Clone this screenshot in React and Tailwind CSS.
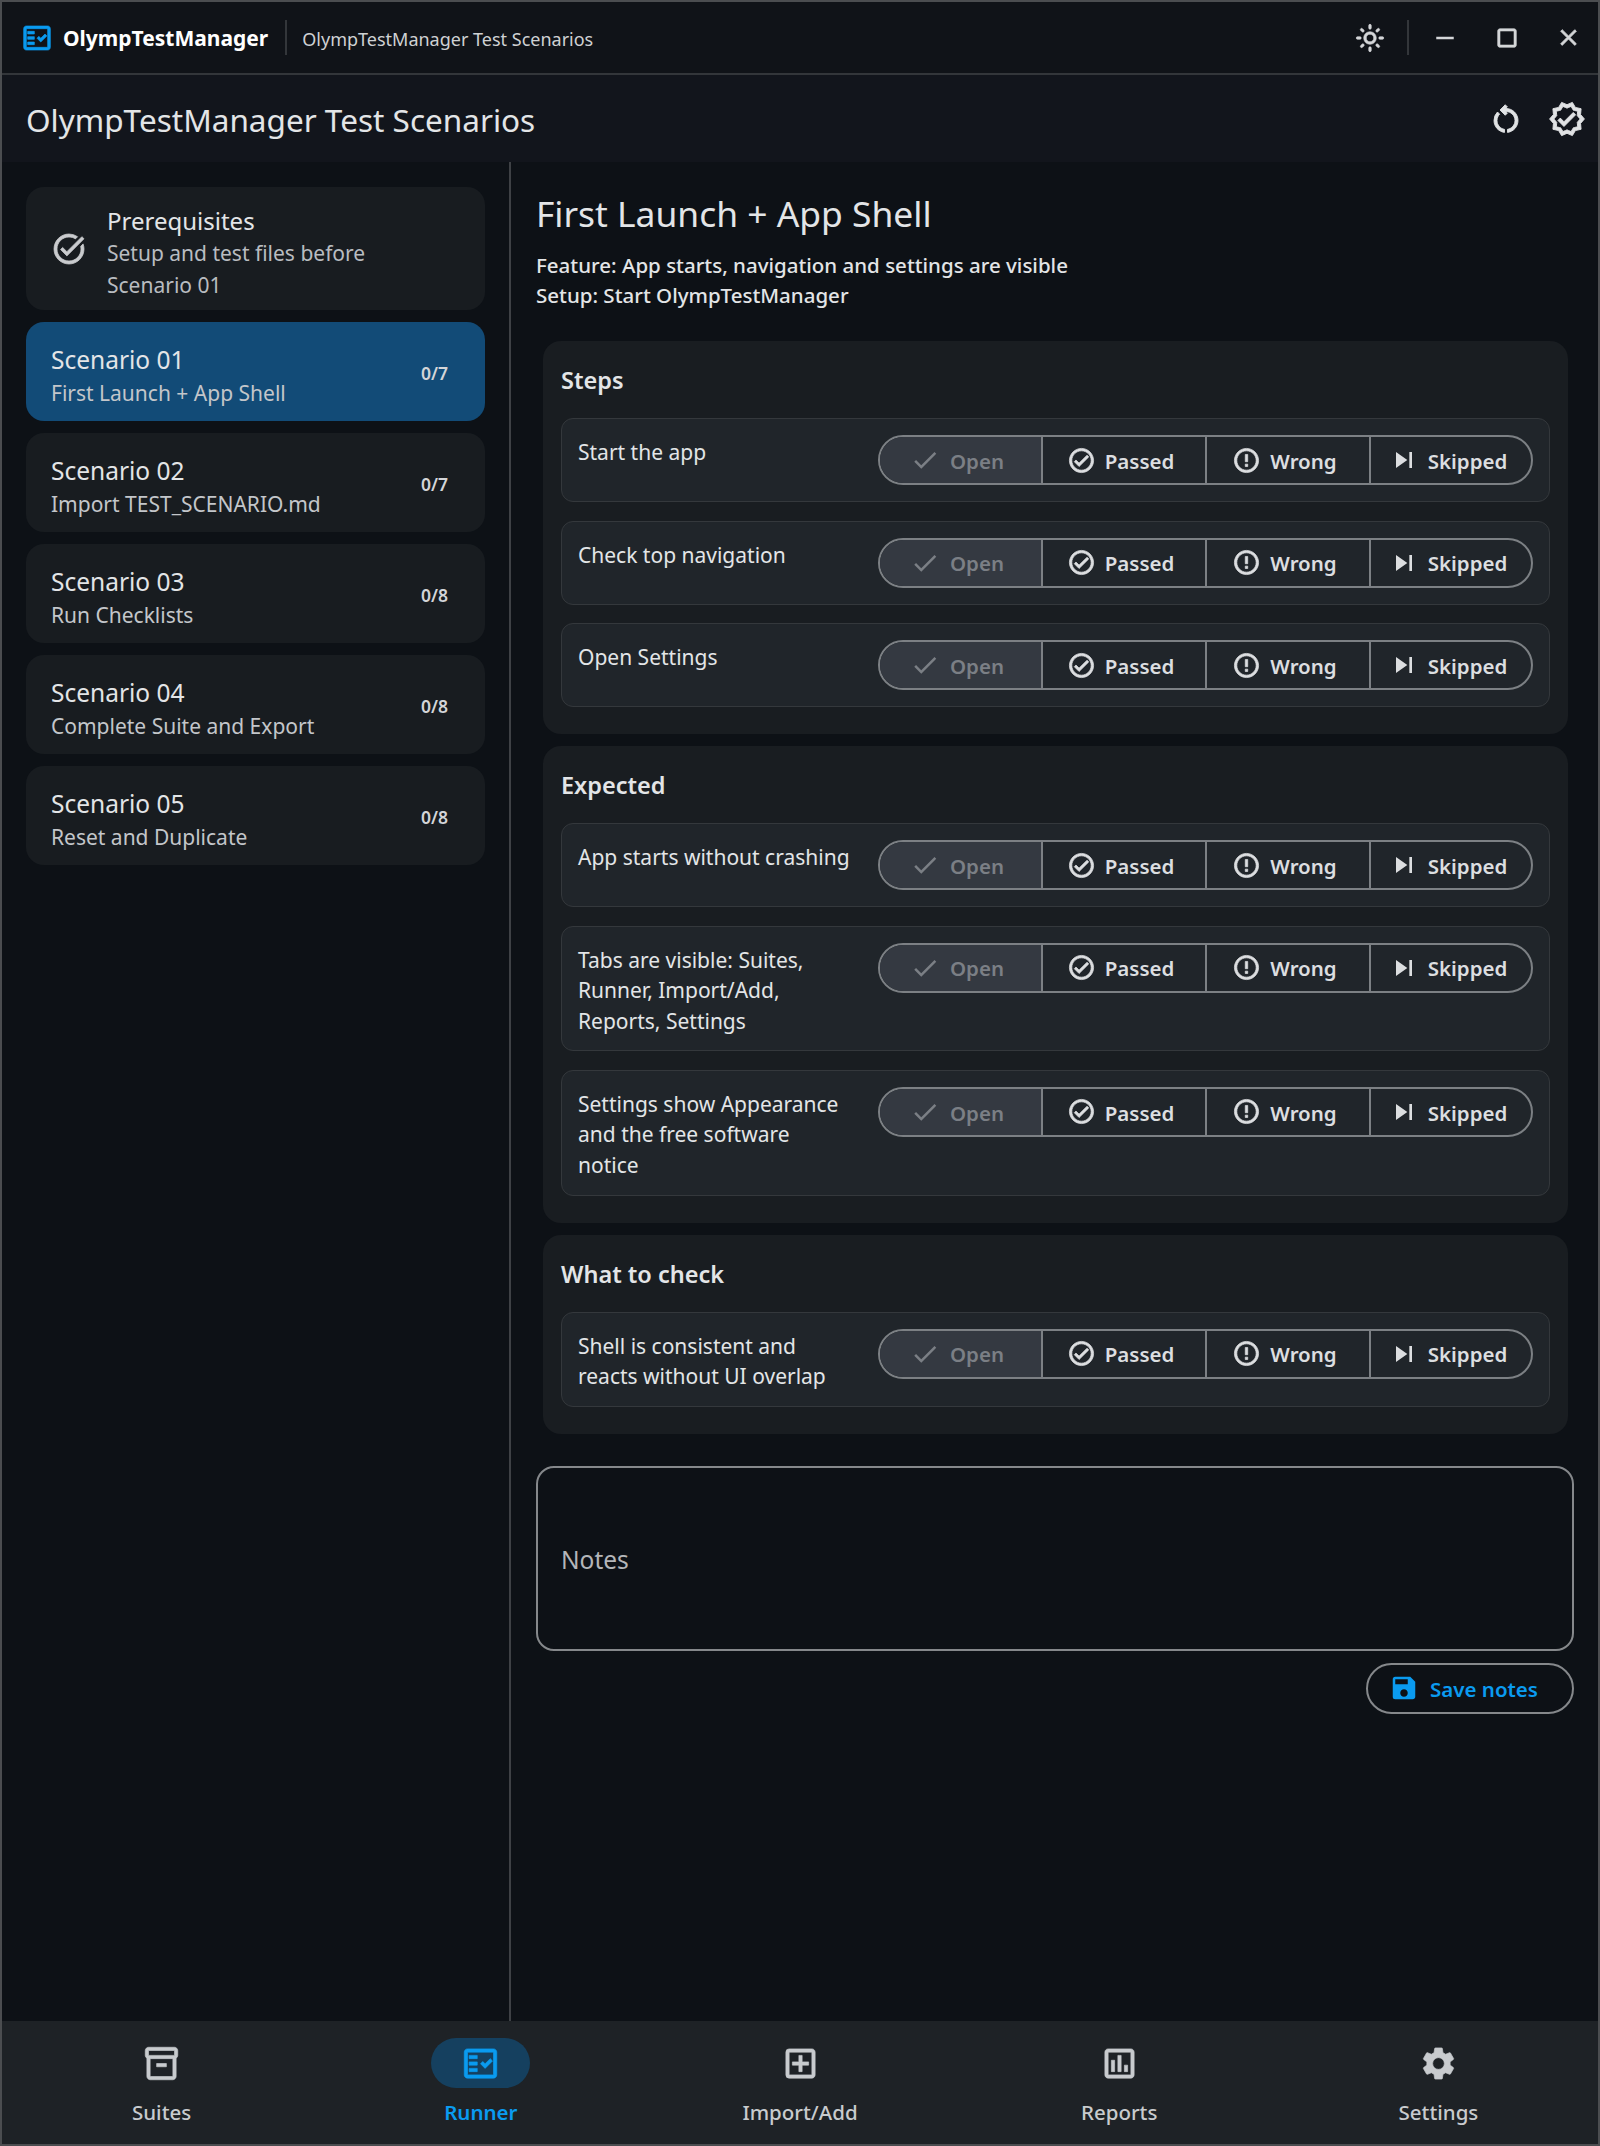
import {
  MdCheck,
  MdClose,
  MdCropSquare,
  MdErrorOutline,
  MdOutlineAddBox,
  MdOutlineAssessment,
  MdOutlineCheckCircle,
  MdOutlineFactCheck,
  MdOutlineInventory2,
  MdOutlineLightMode,
  MdOutlineRestartAlt,
  MdOutlineTaskAlt,
  MdOutlineVerified,
  MdRemove,
  MdSave,
  MdSettings,
  MdSkipNext,
} from "react-icons/md";

const scenarios = [
  { title: "Scenario 01", sub: "First Launch + App Shell", count: "0/7", active: true },
  { title: "Scenario 02", sub: "Import TEST_SCENARIO.md", count: "0/7" },
  { title: "Scenario 03", sub: "Run Checklists", count: "0/8" },
  { title: "Scenario 04", sub: "Complete Suite and Export", count: "0/8" },
  { title: "Scenario 05", sub: "Reset and Duplicate", count: "0/8" },
];

const sections = [
  {
    title: "Steps",
    rows: [["Start the app"], ["Check top navigation"], ["Open Settings"]],
  },
  {
    title: "Expected",
    rows: [
      ["App starts without crashing"],
      ["Tabs are visible: Suites,", "Runner, Import/Add,", "Reports, Settings"],
      ["Settings show Appearance", "and the free software", "notice"],
    ],
  },
  {
    title: "What to check",
    rows: [["Shell is consistent and", "reacts without UI overlap"]],
  },
];

const navItems = [
  { label: "Suites", icon: MdOutlineInventory2 },
  { label: "Runner", icon: MdOutlineFactCheck, active: true },
  { label: "Import/Add", icon: MdOutlineAddBox },
  { label: "Reports", icon: MdOutlineAssessment },
  { label: "Settings", icon: MdSettings },
];

function StatusControl() {
  return (
    <div className="flex h-[50px] w-[655px] shrink-0 overflow-hidden rounded-full border-2 border-[#7c8084] text-[20.5px] font-semibold leading-none text-[#dcdee0]">
      <div className="flex w-[161px] items-center justify-center gap-[10px] bg-[#343941] pr-[7px] text-[#7b7f85]">
        <MdCheck size={30} />
        <span className="pt-[2px]">Open</span>
      </div>
      <div className="flex w-[164px] items-center justify-center gap-[9px] border-l-2 border-[#7c8084] pr-[7px]">
        <MdOutlineCheckCircle size={29} stroke="currentColor" strokeWidth={0.6} />
        <span className="pt-[2px]">Passed</span>
      </div>
      <div className="flex w-[164px] items-center justify-center gap-[9px] border-l-2 border-[#7c8084] pr-[7px]">
        <MdErrorOutline size={29} stroke="currentColor" strokeWidth={0.6} />
        <span className="pt-[2px]">Wrong</span>
      </div>
      <div className="flex flex-1 items-center justify-center gap-[8px] border-l-2 border-[#7c8084] pr-[7px]">
        <MdSkipNext size={32} />
        <span className="pt-[2px]">Skipped</span>
      </div>
    </div>
  );
}

export default function App() {
  return (
    <div className="flex h-[2146px] w-[1600px] flex-col overflow-hidden border-2 border-[#4b4d50] bg-[#0d1116] font-['Noto_Sans','Open_Sans',sans-serif] text-[#e3e5e7] [&_[fill=none]]:stroke-none">
      {/* title bar */}
      <div className="flex h-[73px] shrink-0 items-center border-b-2 border-[#33363a] bg-[#101318] pl-[19px] pr-[16px]">
        <MdOutlineFactCheck size={32} className="text-[#0a9bf0]" stroke="currentColor" strokeWidth={0.5} />
        <span className="ml-[10px] pt-[3px] text-[21px] font-bold text-white">OlympTestManager</span>
        <div className="ml-[17px] h-[35px] w-[2px] bg-[#33363a]" />
        <span className="ml-[15px] pt-[3px] text-[18px] text-[#cfd1d3]">OlympTestManager Test Scenarios</span>
        <div className="ml-auto flex items-center text-[#d4d6d8]">
          <MdOutlineLightMode size={30} stroke="currentColor" strokeWidth={0.5} />
          <div className="ml-[22px] h-[35px] w-[2px] bg-[#33363a]" />
          <MdRemove size={30} className="ml-[21px]" />
          <MdCropSquare size={28} className="ml-[33px]" stroke="currentColor" strokeWidth={0.5} />
          <MdClose size={27} className="ml-[34px]" stroke="currentColor" strokeWidth={0.7} />
        </div>
      </div>

      {/* page header */}
      <div className="flex h-[87px] shrink-0 items-center justify-between bg-[#12151c] pl-[24px] pr-[12px]">
        <h1 className="pt-[2px] text-[31.5px] font-normal text-[#e3e5e7]">OlympTestManager Test Scenarios</h1>
        <div className="flex items-center gap-[24px] text-[#e0e2e4]">
          <MdOutlineRestartAlt size={36} stroke="currentColor" strokeWidth={0.6} />
          <MdOutlineVerified size={38} stroke="currentColor" strokeWidth={0.6} />
        </div>
      </div>

      <div className="flex min-h-0 flex-1">
        {/* scenario list */}
        <aside className="flex w-[509px] shrink-0 flex-col gap-[12px] border-r-2 border-[#3e4145] pl-[24px] pr-[24px] pt-[25px]">
          <div className="flex h-[123px] items-center gap-[20px] rounded-[18px] bg-[#181c20] pl-[25px]">
            <MdOutlineTaskAlt size={36} className="text-[#c9cbce]" stroke="currentColor" strokeWidth={0.5} />
            <div className="pt-[7px]">
              <div className="text-[24px] leading-[33px] text-[#e3e5e7]">Prerequisites</div>
              <div className="text-[21px] leading-[32px] text-[#b9bcc0]">
                Setup and test files before
                <br />
                Scenario 01
              </div>
            </div>
          </div>
          {scenarios.map((s) => (
            <div
              key={s.title}
              className={
                s.active
                  ? "flex h-[99px] items-center justify-between rounded-[18px] bg-[#124b77] pl-[25px] pr-[37px]"
                  : "flex h-[99px] items-center justify-between rounded-[18px] bg-[#181c20] pl-[25px] pr-[37px]"
              }
            >
              <div className="pt-[9px]">
                <div className="text-[24.5px] leading-[34px] text-[#e3e5e7]">{s.title}</div>
                <div className="text-[21px] leading-[33px] text-[#c3c6ca]">{s.sub}</div>
              </div>
              <span className="pt-[3px] text-[17.5px] font-semibold text-[#d3d5d8]">{s.count}</span>
            </div>
          ))}
        </aside>

        {/* scenario detail */}
        <main className="flex min-w-0 flex-1 flex-col pl-[25px] pr-[24px] pt-[28px]">
          <h2 className="text-[35.4px] font-normal leading-[46px] text-[#e3e5e7]">First Launch + App Shell</h2>
          <p className="mt-[14px] text-[20.5px] font-medium leading-[30px] text-[#e3e5e7]">
            Feature: App starts, navigation and settings are visible
            <br />
            Setup: Start OlympTestManager
          </p>

          <div className="ml-[7px] mr-[6px] mt-[31px] flex flex-col gap-[12px]">
            {sections.map((section) => (
              <section key={section.title} className="rounded-[18px] bg-[#191d21] px-[18px] pb-[27px] pt-[24px]">
                <h3 className="text-[23.5px] font-semibold leading-[30px] text-[#e3e5e7]">{section.title}</h3>
                <div className="mt-[23px] flex flex-col gap-[18.5px]">
                  {section.rows.map((lines) => (
                    <div
                      key={lines[0]}
                      className="flex items-start justify-between rounded-[12px] border border-[#34383c] bg-[#20252a] py-[16px] pl-[16px] pr-[16px]"
                    >
                      <div className="-mb-[2px] pt-[2px] text-[21px] leading-[30.6px] text-[#e3e5e7]">
                        {lines.map((line) => (
                          <div key={line}>{line}</div>
                        ))}
                      </div>
                      <StatusControl />
                    </div>
                  ))}
                </div>
              </section>
            ))}
          </div>

          <div className="mt-[32px] flex h-[185px] items-center rounded-[18px] border-2 border-[#85888b] pl-[23px] pt-[5px] text-[24.5px] text-[#b4b6b9]">
            Notes
          </div>
          <button className="ml-auto mt-[12px] flex h-[51px] w-[208px] items-center gap-[11px] rounded-full border-2 border-[#85888b] pl-[21px] text-[20.5px] font-semibold text-[#0a9bf0]">
            <MdSave size={30} />
            <span className="pt-[2px]">Save notes</span>
          </button>
        </main>
      </div>

      {/* bottom navigation */}
      <nav className="flex h-[123px] shrink-0 bg-[#1e2226]">
        {navItems.map((item) => {
          const Icon = item.icon;
          return (
            <div
              key={item.label}
              className={
                item.active
                  ? "flex flex-1 flex-col items-center pt-[17px] text-[#0a9bf0]"
                  : "flex flex-1 flex-col items-center pt-[17px] text-[#c8cbce]"
              }
            >
              <div
                className={
                  item.active
                    ? "flex h-[50px] w-[99px] items-center justify-center rounded-full bg-[#15405f]"
                    : "flex h-[50px] w-[99px] items-center justify-center rounded-full"
                }
              >
                <Icon size={39} stroke="currentColor" strokeWidth={0.4} />
              </div>
              <span className={item.active ? "mt-[9px] text-[20.5px] font-semibold" : "mt-[9px] text-[20.5px] font-medium"}>
                {item.label}
              </span>
            </div>
          );
        })}
      </nav>
    </div>
  );
}
